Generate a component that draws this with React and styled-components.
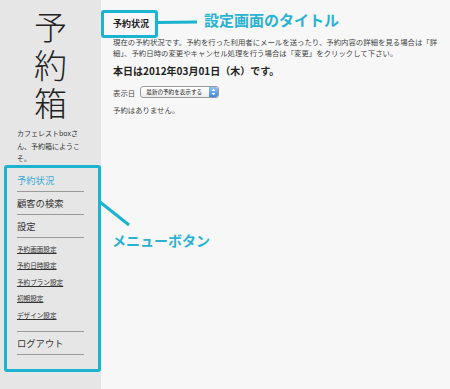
import React from "react";
import styled, { createGlobalStyle } from "styled-components";

const CYAN = "#1ab3d0";

const GlobalStyle = createGlobalStyle`
  html, body {
    margin: 0;
    padding: 0;
    background: #f7f7f7;
  }
  body {
    font-family: "Noto Sans CJK JP", "Liberation Sans", sans-serif;
    color: #333;
  }
`;

const Page = styled.div`
  position: relative;
  display: flex;
  width: 450px;
  height: 389px;
  overflow: hidden;
  background: #f7f7f7;
`;

const Sidebar = styled.aside`
  width: 101px;
  flex-shrink: 0;
  background: #e6e6e6;
  display: flex;
  flex-direction: column;
`;

const Logo = styled.div`
  align-self: center;
  margin-top: 11px;
  height: 114px;
  writing-mode: vertical-rl;
  font-size: 33px;
  line-height: 40px;
  letter-spacing: 5px;
  font-weight: 300;
  color: #222;
`;

const Welcome = styled.p`
  margin: 2px 0 0 17px;
  width: 64px;
  font-size: 7px;
  line-height: 12.5px;
  color: #333;
`;

const Menu = styled.nav`
  display: flex;
  flex-direction: column;
  margin: 4px 0 0 17px;
  width: 67px;
`;

const MenuItem = styled.a`
  display: block;
  padding: 3px 0;
  line-height: 16px;
  font-size: 9.3px;
  color: ${(p) => (p.$active ? "#3aa9d6" : "#333")};
  text-decoration: none;
  border-bottom: 1px solid #9a9a9a;
`;

const SubList = styled.div`
  display: flex;
  flex-direction: column;
  padding: 3px 0 8px;
  border-bottom: 1px solid #9a9a9a;
`;

const SubLink = styled.a`
  display: block;
  line-height: 16.5px;
  font-size: 6.6px;
  color: #333;
  text-decoration: underline;
  white-space: nowrap;
`;

const Main = styled.main`
  flex: 1;
  padding: 18px 0 0 12px;
  display: flex;
  flex-direction: column;
`;

const Title = styled.h1`
  margin: 0;
  font-size: 9px;
  line-height: 12px;
  font-weight: bold;
  color: #222;
`;

const Lead = styled.p`
  margin: 7px 0 0;
  width: 330px;
  font-size: 7.4px;
  line-height: 10.5px;
  color: #444;
`;

const Today = styled.h2`
  margin: 6px 0 0;
  font-size: 10px;
  line-height: 14px;
  font-weight: bold;
  color: #222;
`;

const Row = styled.div`
  display: flex;
  align-items: center;
  gap: 5px;
  margin-top: 8px;
  font-size: 7.4px;
  color: #444;
`;

const Select = styled.div`
  display: flex;
  align-items: center;
  justify-content: space-between;
  width: 79px;
  height: 12px;
  box-sizing: border-box;
  border: 1px solid #9a9a9a;
  border-radius: 3px;
  background: linear-gradient(#ffffff, #ececec);
  font-size: 5.6px;
  padding-left: 5px;
  color: #222;
  overflow: hidden;
`;

const SelectArrow = styled.span`
  width: 9px;
  height: 10px;
  border-radius: 0 2px 2px 0;
  background: linear-gradient(#8fc2f2, #3b86e0);
  display: flex;
  align-items: center;
  justify-content: center;
`;

const Empty = styled.p`
  margin: 7px 0 0;
  font-size: 7.4px;
  line-height: 10px;
  color: #444;
`;

/* annotation overlays */
const Frame = styled.div`
  position: absolute;
  left: ${(p) => p.$x}px;
  top: ${(p) => p.$y}px;
  width: ${(p) => p.$w}px;
  height: ${(p) => p.$h}px;
  box-sizing: border-box;
  border: 3px solid ${CYAN};
  border-radius: 3px;
`;

const Note = styled.div`
  position: absolute;
  left: ${(p) => p.$x}px;
  top: ${(p) => p.$y}px;
  font-size: ${(p) => p.$size}px;
  font-weight: bold;
  color: #2ab2d2;
  line-height: 1;
  white-space: nowrap;
`;

const Lines = styled.svg`
  position: absolute;
  left: 0;
  top: 0;
  pointer-events: none;
`;

export default function App() {
  const subs = ["予約画面設定", "予約日時設定", "予約プラン設定", "初期設定", "デザイン設定"];
  return (
    <>
      <GlobalStyle />
      <Page>
        <Sidebar>
          <Logo>予約箱</Logo>
          <Welcome>カフェレストboxさん、予約箱にようこそ。</Welcome>
          <Menu>
            <MenuItem $active>予約状況</MenuItem>
            <MenuItem>顧客の検索</MenuItem>
            <MenuItem>設定</MenuItem>
            <SubList>
              {subs.map((s) => (
                <SubLink key={s}>{s}</SubLink>
              ))}
            </SubList>
            <MenuItem>ログアウト</MenuItem>
          </Menu>
        </Sidebar>
        <Main>
          <Title>予約状況</Title>
          <Lead>
            現在の予約状況です。予約を行った利用者にメールを送ったり、予約内容の詳細を見る場合は「詳細」、予約日時の変更やキャンセル処理を行う場合は「変更」をクリックして下さい。
          </Lead>
          <Today>本日は2012年03月01日（木）です。</Today>
          <Row>
            表示日
            <Select>
              最新の予約を表示する
              <SelectArrow>
                <svg width="5" height="8" viewBox="0 0 5 8">
                  <path d="M0.5 3 L2.5 0.8 L4.5 3 Z M0.5 5 L2.5 7.2 L4.5 5 Z" fill="#fff" />
                </svg>
              </SelectArrow>
            </Select>
          </Row>
          <Empty>予約はありません。</Empty>
        </Main>

        <Frame $x={101} $y={10} $w={57} $h={28} />
        <Frame $x={4} $y={165} $w={97} $h={207} />
        <Lines width="450" height="389">
          <line x1="157" y1="22.5" x2="197" y2="22" stroke={CYAN} strokeWidth="3" />
          <line x1="100" y1="202" x2="129" y2="225" stroke={CYAN} strokeWidth="3" />
        </Lines>
        <Note $x={204} $y={12} $size={15}>設定画面のタイトル</Note>
        <Note $x={112} $y={233} $size={14}>メニューボタン</Note>
      </Page>
    </>
  );
}
